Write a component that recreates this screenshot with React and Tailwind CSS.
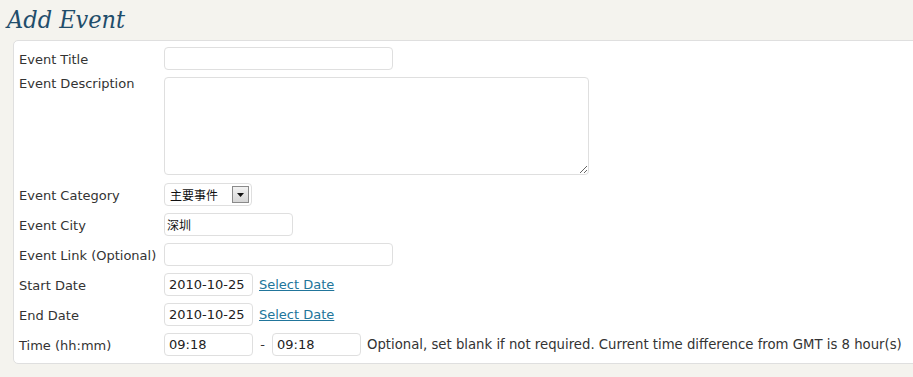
import React from "react";

const font = { fontFamily: '"DejaVu Sans", Verdana, "Noto Sans CJK SC", sans-serif' };

function Label({ children, top }) {
  return (
    <div className={`w-[145px] shrink-0 text-[13px] text-[#333] ${top ? "leading-[14px] self-start" : "leading-[23px] pt-[2px]"}`}>
      {children}
    </div>
  );
}

function Input({ w, value = "" }) {
  return (
    <input
      readOnly
      value={value}
      className={`${w} h-[23px] rounded-[4px] border border-[#dfdfdf] bg-white px-[4px] text-[13px] text-[#222] outline-none`}
      style={font}
    />
  );
}

export default function App() {
  return (
    <div className="h-[377px] w-[913px] overflow-hidden bg-[#f4f3ee]" style={font}>
      <h1
        className="pl-[7px] pt-[5px] text-[25px] italic leading-[30px] text-[#1f4d6b]"
        style={{ fontFamily: '"DejaVu Serif Condensed", "DejaVu Serif", Georgia, serif', fontWeight: 400 }}
      >
        Add Event
      </h1>
      <div className="ml-[13px] mt-[5px] w-[920px] rounded-tl-[5px] rounded-bl-[5px] border border-[#dfdfdf] bg-white pl-[5px] pt-[6px] pb-[7px]">
        <div className="flex flex-col gap-[7px]">
          <div className="flex h-[23px] items-center">
            <Label>Event Title</Label>
            <Input w="w-[229px]" />
          </div>
          <div className="flex items-start">
            <Label top>Event Description</Label>
            <textarea
              readOnly
              className="h-[98px] w-[425px] rounded-[4px] border border-[#dfdfdf] bg-white outline-none"
            />
          </div>
          <div className="mt-[1px] flex h-[23px] items-center">
            <Label>Event Category</Label>
            <div className="flex h-[23px] w-[88px] items-center justify-between rounded-[4px] border border-[#dfdfdf] bg-white pl-[5px] pr-[2px]">
              <span className="text-[12px] text-[#111]" style={{ fontFamily: '"Noto Sans CJK SC", sans-serif' }}>
                主要事件
              </span>
              <span className="flex h-[17px] w-[17px] items-center justify-center border border-[#8a8a8a] bg-gradient-to-b from-[#f2f2f2] to-[#d6d6d6]">
                <svg width="7" height="4" viewBox="0 0 7 4">
                  <path d="M0 0h7L3.5 4z" fill="#111" />
                </svg>
              </span>
            </div>
          </div>
          <div className="flex h-[23px] items-center">
            <Label>Event City</Label>
            <input
              readOnly
              value="深圳"
              className="h-[23px] w-[129px] rounded-[4px] border border-[#dfdfdf] bg-white px-[2px] text-[12px] text-[#111] outline-none"
              style={{ fontFamily: '"Noto Sans CJK SC", sans-serif' }}
            />
          </div>
          <div className="flex h-[23px] items-center">
            <Label>Event Link (Optional)</Label>
            <Input w="w-[229px]" />
          </div>
          <div className="flex h-[23px] items-center">
            <Label>Start Date</Label>
            <Input w="w-[89px]" value="2010-10-25" />
            <a className="ml-[6px] text-[13px] text-[#21759b] underline">Select Date</a>
          </div>
          <div className="flex h-[23px] items-center">
            <Label>End Date</Label>
            <Input w="w-[89px]" value="2010-10-25" />
            <a className="ml-[6px] text-[13px] text-[#21759b] underline">Select Date</a>
          </div>
          <div className="flex h-[23px] items-center">
            <Label>Time (hh:mm)</Label>
            <Input w="w-[89px]" value="09:18" />
            <span className="w-[19px] text-center text-[13px] text-[#333]">-</span>
            <Input w="w-[89px]" value="09:18" />
            <span className="ml-[6px] whitespace-nowrap text-[13.25px] text-[#333]">
              Optional, set blank if not required. Current time difference from GMT is 8 hour(s)
            </span>
          </div>
        </div>
      </div>
    </div>
  );
}
